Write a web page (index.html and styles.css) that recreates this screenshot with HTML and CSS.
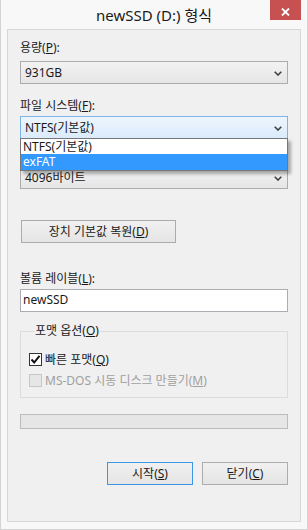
FILE: index.html
```html
<!DOCTYPE html>
<html lang="ko">
<head>
    <meta charset="UTF-8">
    <meta name="viewport" content="width=device-width, initial-scale=1.0">
    <title>newSSD (D:) 형식</title>
    <link rel="stylesheet" href="styles.css">
</head>
<body>
    <div class="window">
        <div class="titlebar">
            <span></span>
            <span class="title">newSSD (D:) 형식</span>
            <span class="title-right">
                <button class="close" aria-label="닫기">
                    <svg width="9" height="8" viewBox="0 0 9 8"><path d="M1 0.5 L8 7.5 M8 0.5 L1 7.5" stroke="#fff" stroke-width="1.8" fill="none"/></svg>
                </button>
            </span>
        </div>
        <div class="client">
            <div class="label">용량(<u>P</u>):</div>
            <div class="combo">
                <span>931GB</span>
                <svg class="chevron" width="8" height="5" viewBox="0 0 8 5"><path d="M0.7 0.7 L4 4 L7.3 0.7" stroke="#404040" stroke-width="1.6" fill="none"/></svg>
            </div>

            <div class="label label-2">파일 시스템(<u>F</u>):</div>
            <div class="combo combo-focus combo-2">
                <span>NTFS(기본값)</span>
                <svg class="chevron" width="8" height="5" viewBox="0 0 8 5"><path d="M0.7 0.7 L4 4 L7.3 0.7" stroke="#404040" stroke-width="1.6" fill="none"/></svg>
                <ul class="dropdown">
                    <li>NTFS(기본값)</li>
                    <li class="selected">exFAT</li>
                </ul>
            </div>

            <!-- covered by the open list -->
            <div class="label label-3">할당 단위 크기(<u>A</u>):</div>
            <div class="combo combo-3">
                <span>4096바이트</span>
                <svg class="chevron" width="8" height="5" viewBox="0 0 8 5"><path d="M0.7 0.7 L4 4 L7.3 0.7" stroke="#404040" stroke-width="1.6" fill="none"/></svg>
            </div>

            <button class="btn btn-reset">장치 기본값 복원(<u>D</u>)</button>

            <div class="label label-4">볼륨 레이블(<u>L</u>):</div>
            <div class="textbox">newSSD</div>

            <fieldset class="group">
                <legend>포맷 옵션(<u>O</u>)</legend>
                <div class="check">
                    <span class="box">
                        <svg width="11" height="11" viewBox="0 0 11 11"><path d="M1.5 5.5 L4.2 8.5 L9.5 1.8" stroke="#111" stroke-width="2" fill="none"/></svg>
                    </span>
                    <span>빠른 포맷(<u>Q</u>)</span>
                </div>
                <div class="check disabled">
                    <span class="box"></span>
                    <span>MS-DOS 시동 디스크 만들기(<u>M</u>)</span>
                </div>
            </fieldset>

            <div class="progress"></div>

            <div class="actions">
                <button class="btn btn-default">시작(<u>S</u>)</button>
                <button class="btn">닫기(<u>C</u>)</button>
            </div>
        </div>
    </div>
</body>
</html>
```

FILE: styles.css
```css
* { box-sizing: border-box; }
body { margin: 0; background: #f8f8f8; font-family: "Noto Sans", "Noto Sans CJK KR", sans-serif; font-size: 12px; color: #1a1a1a; }
u { text-decoration-thickness: 1px; text-underline-offset: 1px; }

.window { width: 308px; height: 530px; background: #f8f8f8; border: 1px solid #d4d4d4; border-top: none; }
.titlebar { height: 29px; display: grid; grid-template-columns: 1fr auto 1fr; align-items: start; }
.title { font-size: 15px; line-height: 20px; margin-top: 5px; color: #1a1a1a; }
.title-right { display: flex; justify-content: flex-end; padding-right: 6px; }
.close { width: 31px; height: 20px; padding: 0; border: none; background: #c75050; display: flex; align-items: center; justify-content: center; padding-top: 3px; }

.client { margin-left: 6px; width: 294px; height: 493px; background: #f0f0f0; border: 1px solid #d7d7d7; padding: 10px 12px 0 12px; display: flex; flex-direction: column; align-items: flex-start; }

.label { line-height: 16px; height: 16px; white-space: nowrap; }
.label-2 { margin-top: 14px; }
.label-3 { margin-top: 8px; visibility: hidden; }
.label-4 { margin-top: 28px; }

.combo { position: relative; width: 268px; height: 23px; margin-top: 5px; border: 1px solid #acacac; background: linear-gradient(#f2f2f2, #e6e6e6); display: flex; align-items: center; justify-content: space-between; padding: 0 5px 0 4px; line-height: 16px; }
.combo-focus { border-color: #7eb4ea; background: linear-gradient(#edf5fd, #dbebfb); }
.combo-2 { margin-top: 2px; z-index: 2; }
.combo-3 { margin-top: 3px; }
.chevron { margin-top: 1px; }

.dropdown { position: absolute; left: -1px; top: 21px; width: 268px; margin: 0; padding: 0; list-style: none; background: #fff; border: 1px solid #767676; box-shadow: 3px 3px 3px rgba(0, 0, 0, 0.3); }
.dropdown li { height: 15px; line-height: 15px; padding-left: 2px; }
.dropdown li.selected { height: 16px; line-height: 16px; background: #3399ff; color: #fff; }

.btn { font-family: inherit; font-size: 12px; color: #1a1a1a; height: 23px; padding: 0; border: 1px solid #acacac; background: linear-gradient(#f0f0f0, #e5e5e5); line-height: 16px; }
.btn-reset { width: 155px; margin-top: 31px; margin-left: 1px; }
.btn-default { border-color: #3d95e8; }

.textbox { width: 268px; height: 23px; margin-top: 2px; background: #fff; border: 1px solid #abadb3; padding-left: 2px; line-height: 20px; }

.group { width: 268px; margin: 11px 0 0 0; padding: 10px 8px 6px 8px; border: 1px solid #dcdcdc; min-width: 0; }
.group legend { padding: 0 1px; margin-left: 5px; line-height: 16px; }
.check { height: 21px; display: flex; align-items: center; gap: 3px; line-height: 16px; white-space: nowrap; }
.box { width: 13px; height: 13px; border: 1px solid #333; background: #fff; display: flex; align-items: center; justify-content: center; }
.check.disabled { color: #a0a0a0; }
.check.disabled .box { border-color: #c6c6c6; background: #e6e6e6; }

.progress { width: 268px; height: 15px; margin-top: 16px; border: 1px solid #bcbcbc; background: #e6e6e6; }

.actions { width: 268px; margin-top: 33px; display: flex; justify-content: flex-end; gap: 9px; }
.actions .btn { width: 86px; }
```
